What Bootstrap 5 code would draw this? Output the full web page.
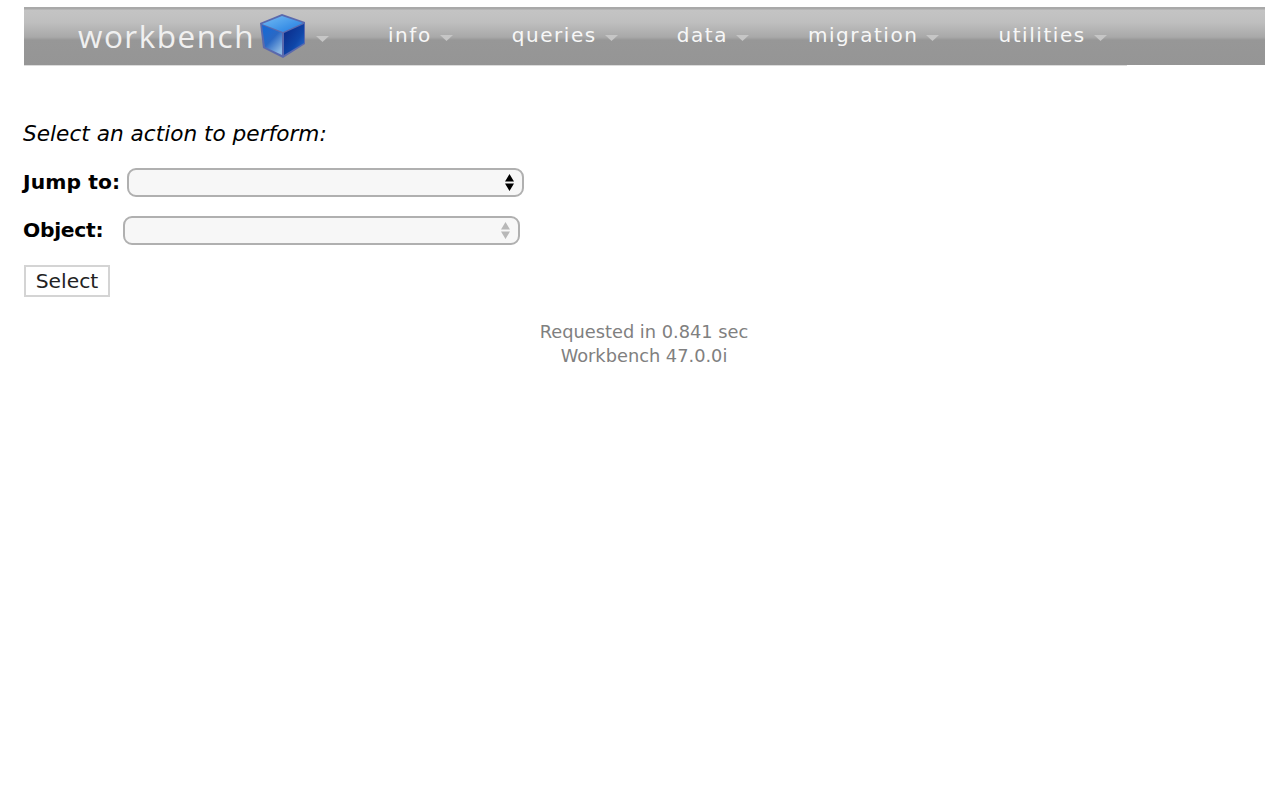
<!DOCTYPE html>
<html lang="en">
<head>
<meta charset="utf-8">
<title>Workbench</title>
<link rel="stylesheet" href="https://cdn.jsdelivr.net/npm/bootstrap@5.3.0/dist/css/bootstrap.min.css">
<style>
html,body{background:#fff;}
body{font-family:"DejaVu Sans","Liberation Sans",sans-serif;color:#000;padding:7px 15px 0 24px;margin:0;}
.wb-bar{height:59px;background:linear-gradient(#dcdcdc,#dcdcdc) left bottom/1103px 1px no-repeat,linear-gradient(180deg,#a9a9a9 0,#a9a9a9 2px,#c4c4c4 3px,#bfbfbf 15px,#a9a9a9 30px,#979797 33px,#959595 58px,#fff 58px);padding-left:54px;}
.wb-logo{font-family:"Open Sans",sans-serif;font-weight:400;font-size:31.5px;letter-spacing:1.5px;color:#f0f0f0;line-height:1;padding-bottom:2px;}
.wb-cube{width:48px;height:46px;margin-left:4px;align-self:flex-start;margin-top:6px;flex:none;}
.wb-caret{width:13px;height:6px;fill:#c6c6c6;flex:none;}
.wb-logo-caret{margin-left:9px;margin-top:5px;margin-right:59px;}
.wb-link{font-size:20px;letter-spacing:1.55px;color:#f7f7f7;text-decoration:none;line-height:1;margin-top:-3px;}
.wb-item{margin-right:59px;gap:8px;}
.wb-item .wb-caret{margin-top:3px;}
.wb-prompt{font-style:italic;font-size:21.65px;line-height:26px;margin:55px 0 20px -1px;}
.wb-row{height:30px;margin-top:18px;}
.wb-label{font-weight:700;font-size:20.3px;margin-left:-1px;}
.wb-label-jump{letter-spacing:.1px;}
.wb-label-obj{letter-spacing:-.3px;}
.wb-select{appearance:none;-webkit-appearance:none;width:397px;height:29px;border:2px solid #b0b0b0;border-radius:9px;background-color:#f7f7f7;background-repeat:no-repeat;background-position:right 8px center;background-size:9px 17px;}
.wb-active{margin-left:7px;background-image:url("data:image/svg+xml,%3Csvg xmlns='http://www.w3.org/2000/svg' viewBox='0 0 9 17'%3E%3Cpath d='M4.500 0 9 7.500H0zM0 9.500h9L4.500 17z' fill='%23000'/%3E%3C/svg%3E");}
.wb-off{margin-left:20px;background-image:url("data:image/svg+xml,%3Csvg xmlns='http://www.w3.org/2000/svg' viewBox='0 0 9 17'%3E%3Cpath d='M4.500 0 9 7.500H0zM0 9.500h9L4.500 17z' fill='%23b8b8b8'/%3E%3C/svg%3E");}
.wb-btn{width:86px;height:32px;margin-top:20px;border:2px solid #d4d4d4;background:#fff;border-radius:0;font-size:20.3px;line-height:1;padding:1px 0 0;color:#222;display:block;}
.wb-foot{color:#808080;font-size:17.8px;line-height:24px;margin-top:23px;padding-right:1px;}
</style>
</head>
<body>
<nav class="wb-bar d-flex align-items-center">
  <span class="wb-logo">workbench</span>
  <svg class="wb-cube" viewBox="0 0 48 46">
    <defs>
      <linearGradient id="t" x1="0" y1="0" x2="1" y2="1"><stop offset="0" stop-color="#74bcf4"/><stop offset="1" stop-color="#1f7be0"/></linearGradient>
      <linearGradient id="l" x1="0" y1="0" x2="0.7" y2="1"><stop offset="0" stop-color="#136ad8"/><stop offset=".55" stop-color="#2a68c4"/><stop offset="1" stop-color="#8ab6e2"/></linearGradient>
      <linearGradient id="r" x1="0" y1="0" x2="1" y2="1"><stop offset="0" stop-color="#0a2684"/><stop offset=".6" stop-color="#0f46a8"/><stop offset="1" stop-color="#2b74d8"/></linearGradient>
    </defs>
    <path d="M23 1 46 9 46 31 24 45 4 35 1 10z" fill="#5a69ad"/>
    <path d="M23 3 44 10 24 19 3 11z" fill="url(#t)"/>
    <path d="M3 12 23 20 23 42 6 34z" fill="url(#l)"/>
    <path d="M45 11 25 20 25 42 45 30z" fill="url(#r)"/>
  </svg>
  <svg class="wb-caret wb-logo-caret" viewBox="0 0 13 6"><path d="M0 0h13L6.500 6z"/></svg>
  <div class="wb-item d-flex align-items-center"><a class="wb-link" href="#">info</a><svg class="wb-caret" viewBox="0 0 13 6"><path d="M0 0h13L6.500 6z"/></svg></div>
  <div class="wb-item d-flex align-items-center"><a class="wb-link" href="#">queries</a><svg class="wb-caret" viewBox="0 0 13 6"><path d="M0 0h13L6.500 6z"/></svg></div>
  <div class="wb-item d-flex align-items-center"><a class="wb-link" href="#">data</a><svg class="wb-caret" viewBox="0 0 13 6"><path d="M0 0h13L6.500 6z"/></svg></div>
  <div class="wb-item d-flex align-items-center"><a class="wb-link" href="#">migration</a><svg class="wb-caret" viewBox="0 0 13 6"><path d="M0 0h13L6.500 6z"/></svg></div>
  <div class="wb-item d-flex align-items-center"><a class="wb-link" href="#">utilities</a><svg class="wb-caret" viewBox="0 0 13 6"><path d="M0 0h13L6.500 6z"/></svg></div>
</nav>
<p class="wb-prompt">Select an action to perform:</p>
<form>
  <div class="wb-row d-flex align-items-center"><label class="wb-label wb-label-jump" for="jump">Jump to:</label><select id="jump" class="wb-select wb-active"></select></div>
  <div class="wb-row d-flex align-items-center"><label class="wb-label wb-label-obj" for="obj">Object:</label><select id="obj" class="wb-select wb-off" disabled></select></div>
  <button type="button" class="wb-btn">Select</button>
</form>
<div class="wb-foot text-center">Requested in 0.841 sec<br>Workbench 47.0.0i</div>
<script src="https://cdn.jsdelivr.net/npm/bootstrap@5.3.0/dist/js/bootstrap.bundle.min.js"></script>
</body>
</html>
